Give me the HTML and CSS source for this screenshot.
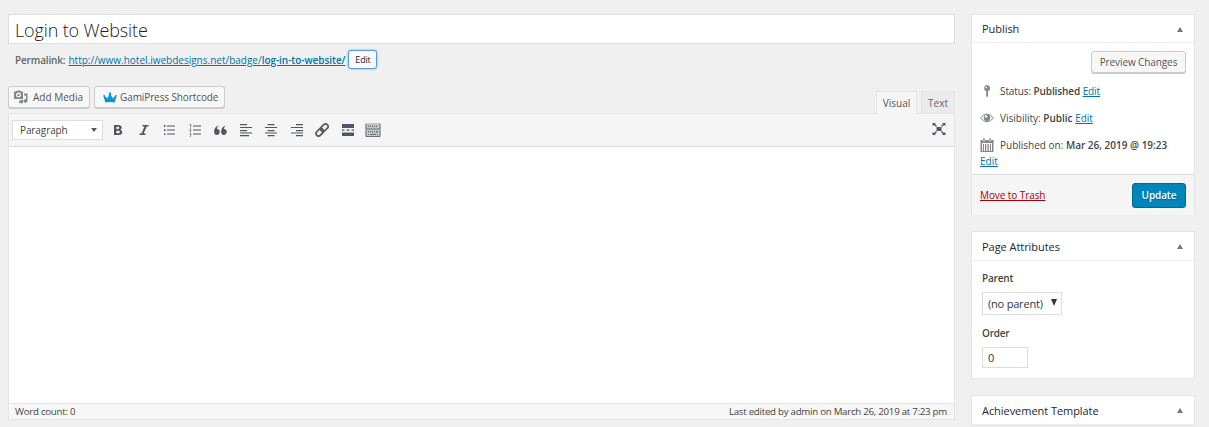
FILE: index.html
```html
<!DOCTYPE html>
<html lang="en">
<head>
    <meta charset="UTF-8">
    <meta name="viewport" content="width=device-width, initial-scale=1.0">
    <title>Edit Badge</title>
    <link rel="stylesheet" href="styles.css">
</head>
<body>
    <div class="wrap">
        <main class="post-body">
            <div class="title">Login to Website</div>
            <div class="permalink">
                <strong>Permalink:</strong>
                <a href="#">http://www.hotel.iwebdesigns.net/badge/<b>log-in-to-website/</b></a>
                <button class="edit-slug">Edit</button>
            </div>

            <div class="editor-tools">
                <button class="button media">
                    <svg width="15" height="14" viewBox="0 0 15 14" fill="#82878c">
                        <path fill-rule="evenodd" d="M0 1.500h2l1-1h3l1 1h2V9H0zM4.500 2.600a2.500 2.500 0 1 0 0 5a2.500 2.500 0 0 0 0-5zM4.500 3.900a1.200 1.200 0 1 1 0 2.400a1.200 1.200 0 0 1 0-2.400z"/>
                        <path d="M10 3.500h3.500v7.500a2 1.700 0 1 1-1.500-1.700V5.500H10zM7.500 9.800H9v2a2 1.600 0 1 1-1.500-1.500z"/>
                    </svg>
                    <span>Add Media</span>
                </button>
                <button class="button shortcode">
                    <svg width="14" height="11" viewBox="0 0 14 11" fill="#0a96d6">
                        <path d="M2.300 10.500L.6 4.600A.9 .9 0 1 1 1.900 4.200L4.600 6.300L6.200 2.200A1.100 1.100 0 1 1 7.800 2.200L9.400 6.300L12.100 4.200A.9 .9 0 1 1 13.400 4.600L11.700 10.500Q7 9.500 2.300 10.500z"/>
                    </svg>
                    <span>GamiPress Shortcode</span>
                </button>
                <div class="tabs">
                    <div class="tab active"><span>Visual</span></div>
                    <div class="tab"><span>Text</span></div>
                </div>
            </div>

            <div class="editor">
                <div class="toolbar">
                    <div class="format"><span>Paragraph</span><i class="caret"></i></div>
                    <div class="tools">
                        <svg viewBox="0 0 16 16"><path fill-rule="evenodd" d="M4 3h4.500c4 0 4 4 1.700 4.700C13.200 8.500 13 13 9 13H4zM6.400 4.800v2.200h1.700c1.600 0 1.600-2.200 0-2.200zM6.400 8.800v2.400h2c2 0 2-2.400 0-2.400z"/></svg>
                        <svg viewBox="0 0 16 16"><path d="M6.500 3H12.500V4.500H10.700L7.700 11.500H9.500V13H3.500V11.500H5.500L8.500 4.500H6.500z"/></svg>
                        <svg viewBox="0 0 16 16"><path d="M3 3h1.500v1.700H3zM3 7.200h1.500v1.700H3zM3 11.400h1.500v1.700H3zM6 3.500h8v1H6zM6 7.500h8v1H6zM6 11.500h8v1H6z"/></svg>
                        <svg viewBox="0 0 16 16"><path d="M6 3.500h8v1H6zM6 7.500h8v1H6zM6 11.500h8v1H6z"/><path opacity=".75" d="M3.200 2h1v3.500h-1zM2.500 2.500h1v.7h-1zM2.500 6.500h1.700v2L3.400 9.300h.8v.8H2.500v-1L3.400 8v-.7h-.9zM2.500 11h1.700v3.500H2.500v-.7h.9v-.7h-.6v-.7h.6v-.6h-.9z"/></svg>
                        <svg viewBox="0 0 16 16"><path d="M7 3.500C5.500 4.500 5 5.500 5 7C9 7 8.500 13 4.800 13C1 13 .8 5 7 3.500zM14 3.500C12.500 4.500 12 5.500 12 7C16 7 15.500 13 11.800 13C8 13 7.800 5 14 3.500z"/></svg>
                        <svg viewBox="0 0 16 16"><path d="M2 2h7v1.200H2zM2 5h12v1H2zM2 8h7v1.200H2zM2 10.500h12v1H2zM2 13h9v1.200H2z"/></svg>
                        <svg viewBox="0 0 16 16"><path d="M4.500 2h7v1.200h-7zM2 5h12v1H2zM4.500 8h7v1.200h-7zM2 10.500h12v1H2zM4.500 13h7v1.200h-7z"/></svg>
                        <svg viewBox="0 0 16 16"><path d="M7 2h7v1.200H7zM2 5h12v1H2zM7 8h7v1.200H7zM2 10.500h12v1H2zM7 13h7v1.200H7z"/></svg>
                        <svg viewBox="0 0 16 16"><g transform="rotate(-45 8 8)" fill="none" stroke="#50575e" stroke-width="1.700"><rect x=".5" y="5.500" width="8.500" height="5" rx="2.500"/><rect x="7" y="5.500" width="8.500" height="5" rx="2.500"/></g></svg>
                        <svg viewBox="0 0 16 16"><path d="M2 2h12v4H2zM2 7.500h2.500v1.300H2zM6.500 7.500h3v1.300h-3zM11.500 7.500H14v1.300h-2.500zM2 10.500h12v3.500H2z"/></svg>
                        <svg viewBox="0 0 16 16"><path fill="#c6c8c4" d="M.5 1h15v14H.5z"/><path fill="#66707a" d="M.5 2h1v5h-1zM14.500 2h1v5h-1zM3 3.500h1V5H3zM5 3.500h1V5H5zM7 3.500h1V5H7zM9 3.500h1V5H9zM11 3.500h1V5h-1zM.5 6.500h15v1H.5zM.5 8h1v6.500h-1zM14.500 8h1v6.500h-1zM3 9h1v1.500H3zM5 9h1v1.500H5zM7 9h1v1.500H7zM9 9h1v1.500H9zM11 9h2v1.500h-2zM3 12h1v1H3zM5 12h6v1H5zM12 12h1v1h-1zM1 14h14v1H1z"/></svg>
                    </div>
                    <svg class="fullscreen" viewBox="0 0 16 16"><path d="M5.500 6h5v4h-5zM1.500 2H5L4 3l2 2-1 1-2-2-1.500 1zM14.500 2H11l1 1-2 2 1 1 2-2 1.500 1zM1.500 14H5l-1-1 2-2-1-1-2 2-1.500-1zM14.500 14H11l1-1-2-2 1-1 2 2 1.500-1z"/></svg>
                </div>
                <div class="content"></div>
                <div class="statusbar">
                    <span class="count">Word count: 0</span>
                    <span class="edited">Last edited by admin on March 26, 2019 at 7:23 pm</span>
                </div>
            </div>
        </main>

        <aside class="side">
            <section class="postbox publish">
                <h2><span>Publish</span><i class="arrow"></i></h2>
                <div class="minor">
                    <button class="button preview"><span>Preview Changes</span></button>
                    <p>
                        <svg width="14" height="14" viewBox="0 0 14 14" fill="#82878c"><path fill-rule="evenodd" d="M7 1a3.200 3.200 0 0 1 1 6.200V12L7 13.500L6.200 12V7.200A3.200 3.200 0 0 1 7 1zM5.500 2.800v1.400H7V2.800z"/></svg>
                        <span class="status">Status: <b>Published</b> <a href="#">Edit</a></span>
                    </p>
                    <p>
                        <svg width="14" height="14" viewBox="0 0 14 14"><path d="M.5 7Q7-1 13.500 7Q7 14.500 .5 7z" fill="#fff" stroke="#82878c" stroke-width="1"/><circle cx="7" cy="6.800" r="3.300" fill="#82878c"/><circle cx="6" cy="5.500" r="1.200" fill="#fff"/></svg>
                        <span class="visibility">Visibility: <b>Public</b> <a href="#">Edit</a></span>
                    </p>
                    <p class="date">
                        <svg width="14" height="14" viewBox="0 0 14 14"><path d="M.5 2h13v12H.5z" fill="#82878c"/><path d="M3 0h2v3H3zM9 0h2v3H9z" fill="#82878c" stroke="#fff" stroke-width=".5"/><path d="M2 5h10v1H2zM2 5h1v8H2zM4 5h1v8H4zM6 6h.7v7H6zM7.500 6h.7v7h-.7zM9 5h1v8H9zM11 5h1v8h-1z" fill="#fff"/></svg>
                        <span class="stamp">Published on: <b>Mar 26, 2019 @ 19:23</b></span>
                        <a href="#" class="edit-date">Edit</a>
                    </p>
                </div>
                <div class="major">
                    <a href="#" class="trash">Move to Trash</a>
                    <button class="update"><span>Update</span></button>
                </div>
            </section>

            <section class="postbox attributes">
                <h2><span>Page Attributes</span><i class="arrow"></i></h2>
                <div class="fields">
                    <label>Parent</label>
                    <div class="select"><span>(no parent)</span><i></i></div>
                    <label>Order</label>
                    <div class="order">0</div>
                </div>
            </section>

            <section class="postbox">
                <h2><span>Achievement Template</span><i class="arrow"></i></h2>
            </section>
        </aside>
    </div>
</body>
</html>
```
FILE: styles.css
```css
* {
    box-sizing: border-box;
}
body {
    margin: 0;
    height: 427px;
    overflow: hidden;
    background: #f0f0f0;
    color: #444;
    font-family: "Open Sans", "Noto Sans", sans-serif;
    font-size: 10px;
    line-height: 14px;
}
a {
    color: #0073aa;
    text-underline-offset: 1px;
}
b, strong {
    font-weight: 600;
}
button {
    font-family: inherit;
    font-size: 10px;
    padding: 0;
}
.wrap {
    display: flex;
    gap: 16px;
    padding: 14px 14px 0 8px;
}
.post-body {
    width: 947px;
}
.title {
    height: 30px;
    padding-left: 6px;
    border: 1px solid #ddd;
    background: #fff;
    color: #1d2125;
    font-size: 18px;
    font-weight: 300;
    letter-spacing: -.13px;
    line-height: 30px;
}
.permalink {
    display: flex;
    align-items: center;
    height: 19px;
    margin-top: 6px;
    padding-left: 7px;
    color: #666;
}
.permalink strong {
    letter-spacing: -.15px;
}
.permalink a {
    margin: 0 3px;
}
.permalink b {
    letter-spacing: -.05px;
}
.edit-slug {
    width: 29px;
    height: 19px;
    border: 1px solid #5b9dd9;
    border-radius: 3px;
    background: #fafafa;
    color: #23282d;
    font-size: 9px;
    letter-spacing: -.2px;
    box-shadow: 0 0 2px rgba(30, 140, 190, .8);
}

/* editor */
.editor-tools {
    display: flex;
    gap: 4px;
    height: 27px;
    margin-top: 17px;
}
.button {
    display: flex;
    align-items: center;
    height: 22px;
    border: 1px solid #ccc;
    border-radius: 3px;
    background: #f7f7f7;
    box-shadow: 0 1px 0 #ccc;
    color: #555;
}
.media {
    width: 82px;
    padding-left: 5px;
    gap: 4px;
}
.shortcode {
    width: 131px;
    padding-left: 8px;
    gap: 3px;
    letter-spacing: -.1px;
}
.tabs {
    display: flex;
    gap: 4px;
    margin: 5px 0 0 auto;
}
.tab {
    width: 34px;
    height: 22px;
    border: 1px solid #e5e5e5;
    border-bottom: 0;
    background: #ebebeb;
    color: #666;
    line-height: 22px;
    text-align: center;
}
.tab.active {
    position: relative;
    width: 41px;
    height: 23px;
    background: #f5f5f5;
    color: #555;
}
.editor {
    height: 307px;
    border: 1px solid #e5e5e5;
    background: #fff;
}
.toolbar {
    display: flex;
    align-items: center;
    height: 33px;
    padding: 0 7px 0 3px;
    border-bottom: 1px solid #ddd;
    background: #f5f5f5;
}
.format {
    display: flex;
    align-items: center;
    justify-content: space-between;
    width: 91px;
    height: 20px;
    padding: 0 5px 0 7px;
    border: 1px solid #ddd;
    background: #fff;
    letter-spacing: -.1px;
}
.caret {
    border: 3px solid transparent;
    border-top: 4px solid #50575e;
    border-bottom: 0;
}
.tools {
    display: flex;
    gap: 9.500px;
    margin-left: 7px;
}
.tools svg, .fullscreen {
    width: 16px;
    height: 16px;
    fill: #50575e;
}
.fullscreen {
    margin: -2px 0 0 auto;
}
.content {
    height: 256px;
}
.statusbar {
    display: flex;
    justify-content: space-between;
    height: 16px;
    padding: 0 7px 0 6px;
    border-top: 1px solid #e5e5e5;
    background: #f7f7f7;
    font-size: 9.700px;
    letter-spacing: -.26px;
    line-height: 15px;
}

/* sidebar */
.side {
    width: 224px;
}
.postbox {
    margin-bottom: 16px;
    border: 1px solid #e5e5e5;
    background: #fff;
}
.postbox h2 {
    display: flex;
    align-items: center;
    justify-content: space-between;
    height: 29px;
    margin: 0;
    padding: 1px 11px 0 10px;
    border-bottom: 1px solid #eee;
    color: #23282d;
    font-size: 11px;
    font-weight: 500;
    letter-spacing: -.05px;
}
.postbox.publish h2 {
    height: 28px;
}
.arrow {
    border: 3px solid transparent;
    border-top: 0;
    border-bottom: 5px solid #72777c;
}
.publish {
    height: 201px;
}
.minor {
    height: 131px;
    padding: 8px 8px 0;
}
.preview {
    justify-content: center;
    width: 95px;
    margin-left: auto;
    letter-spacing: -.1px;
}
.minor p {
    display: flex;
    align-items: center;
    gap: 6px;
    height: 16px;
    margin: 10px 0 11px;
}
.minor p + p {
    margin-top: 0;
}
.status {
    letter-spacing: -.1px;
}
.minor .date {
    flex-wrap: wrap;
    row-gap: 1px;
    height: 32px;
}
.minor svg {
    flex: none;
}
.edit-date {
    width: 100%;
}
.major {
    display: flex;
    align-items: center;
    justify-content: space-between;
    height: 41px;
    padding: 0 8px;
    border-top: 1px solid #ddd;
    background: #f5f5f5;
}
.trash {
    color: #a00;
    letter-spacing: -.08px;
}
.update {
    width: 54px;
    height: 25px;
    border: 1px solid #006799;
    border-radius: 3px;
    background: #0085ba;
    color: #fff;
    font-weight: 600;
    letter-spacing: -.1px;
    text-shadow: 0 1px 1px #006799;
}
.attributes {
    height: 148px;
}
.fields {
    padding: 10px 10px 11px;
}
.fields label {
    display: block;
    font-weight: 600;
    letter-spacing: -.2px;
}
.select {
    display: flex;
    align-items: center;
    justify-content: space-between;
    width: 80px;
    height: 23px;
    margin: 7px 0 11px;
    padding: 0 4px 0 5px;
    border: 1px solid #ddd;
    color: #32373c;
    font-size: 11px;
    letter-spacing: -.2px;
}
.select i {
    border: 3.500px solid transparent;
    border-top: 7px solid #32373c;
    border-bottom: 0;
    margin-top: -3px;
}
.order {
    width: 46px;
    height: 21px;
    margin-top: 7px;
    padding-left: 5px;
    border: 1px solid #ddd;
    color: #32373c;
    font-size: 11px;
    line-height: 20px;
}
```
